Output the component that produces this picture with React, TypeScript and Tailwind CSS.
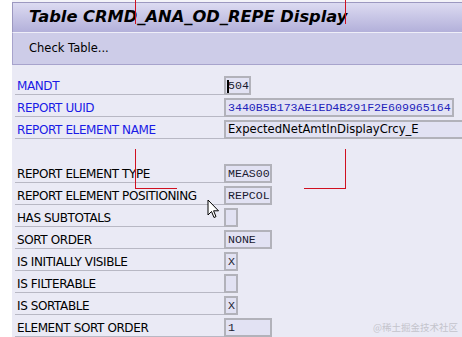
import React from "react";

type Row = { label: string; value?: string; w?: number; blue?: boolean; kind?: "mono" | "sans" | "uuid"; caret?: boolean; gap?: boolean };

const rows: Row[] = [
  { label: "MANDT", value: "504", w: 27, blue: true, caret: true },
  { label: "REPORT UUID", value: "3440B5B173AE1ED4B291F2E609965164", w: 230, blue: true, kind: "uuid" },
  { label: "REPORT ELEMENT NAME", value: "ExpectedNetAmtInDisplayCrcy_E", w: 250, blue: true, kind: "sans" },
  { label: "", gap: true },
  { label: "REPORT ELEMENT TYPE", value: "MEAS00", w: 48 },
  { label: "REPORT ELEMENT POSITIONING", value: "REPCOL", w: 48 },
  { label: "HAS SUBTOTALS", value: "", w: 14 },
  { label: "SORT ORDER", value: "NONE", w: 48 },
  { label: "IS INITIALLY VISIBLE", value: "X", w: 14 },
  { label: "IS FILTERABLE", value: "", w: 14 },
  { label: "IS SORTABLE", value: "X", w: 14 },
  { label: "ELEMENT SORT ORDER", value: "1", w: 48 },
];

export default function App() {
  return (
    <div className="relative w-[462px] h-[337px] overflow-hidden bg-white flex" style={{ fontFamily: "'DejaVu Sans', sans-serif" }}>
      <div className="w-[12px] shrink-0 bg-white" />
      <div className="flex-1 flex flex-col bg-[#eaeaf5]">
        <div className="h-[2px] bg-[#f3f3f8]" />
        <div className="h-[31px] border-l border-t border-[#9c98c0] bg-gradient-to-b from-[#dcdbf1] to-[#b3b0da] flex items-center pl-[16px]">
          <span className="font-bold italic text-black" style={{ fontFamily: "'DejaVu Sans', sans-serif", fontSize: "16.3px" }}>
            Table CRMD_ANA_OD_REPE Display
          </span>
        </div>
        <div className="h-[34px] border-l border-t border-b border-[#a7a3cc] border-t-[#eeeef8] bg-[#cdcce8] flex items-center pl-[16px]">
          <span className="text-black" style={{ fontFamily: "'DejaVu Sans', sans-serif", fontSize: "11.5px" }}>Check Table...</span>
        </div>
        <div className="flex flex-col pt-[8px] pl-[3px]">
          {rows.map((r, i) => (
            <div key={i} className="flex h-[22px]">
              <div className={`w-[209px] shrink-0 flex items-center pl-[2px] pt-[4px] ${r.gap ? "" : "border-b border-[#b8b8c4]"}`}>
                <span className={`whitespace-nowrap ${r.blue ? "text-[#1a1ae6]" : "text-black"}`} style={{ fontFamily: "'DejaVu Sans', sans-serif", fontSize: "12px", letterSpacing: "-0.4px" }}>
                  {r.label}
                </span>
              </div>
              {!r.gap && (
                <div className="flex items-end">
                  <div
                    className="h-[19px] border-2 border-[#b2b2ba] bg-[#e2e2f3] flex items-center pl-[2px] overflow-hidden whitespace-nowrap relative"
                    style={{ width: r.w }}
                  >
                    {r.caret && <span className="absolute left-[1px] top-[2px] w-[2px] h-[13px] bg-black" />}
                    {r.kind === "sans" ? (
                      <span className="text-black" style={{ fontFamily: "'DejaVu Sans', sans-serif", fontSize: "11.6px" }}>{r.value}</span>
                    ) : (
                      <span
                        className={`${r.kind === "uuid" ? "text-[#2222bb]" : "text-[#1a1a30]"}`}
                        style={{ fontFamily: "'Liberation Mono', monospace", fontSize: "11.6px" }}
                      >
                        {r.value}
                      </span>
                    )}
                  </div>
                </div>
              )}
            </div>
          ))}
        </div>
      </div>

      {/* red annotation lines */}
      <div className="absolute left-[135px] top-0 w-px h-[24px] bg-[#d01020]" />
      <div className="absolute left-[345px] top-0 w-px h-[24px] bg-[#d01020]" />
      <div className="absolute left-[135px] top-[149px] w-px h-[40px] bg-[#d01020]" />
      <div className="absolute left-[135px] top-[188px] w-[42px] h-px bg-[#d01020]" />
      <div className="absolute left-[345px] top-[149px] w-px h-[40px] bg-[#d01020]" />
      <div className="absolute left-[304px] top-[188px] w-[42px] h-px bg-[#d01020]" />

      {/* mouse pointer */}
      <svg className="absolute left-[207px] top-[199px]" width="13" height="20" viewBox="0 0 13 20">
        <path d="M1 1 L1 16 L4.5 12.5 L7 18.5 L9 17.6 L6.6 11.8 L11.5 11.8 Z" fill="white" stroke="black" strokeWidth="1" strokeLinejoin="miter" />
      </svg>

      <div className="absolute left-[373px] top-[321px] whitespace-nowrap leading-[12px] text-[#c4c4cc]" style={{ fontFamily: "'Noto Sans CJK SC', sans-serif", fontSize: "9.5px" }}>
        @稀土掘金技术社区
      </div>
    </div>
  );
}
